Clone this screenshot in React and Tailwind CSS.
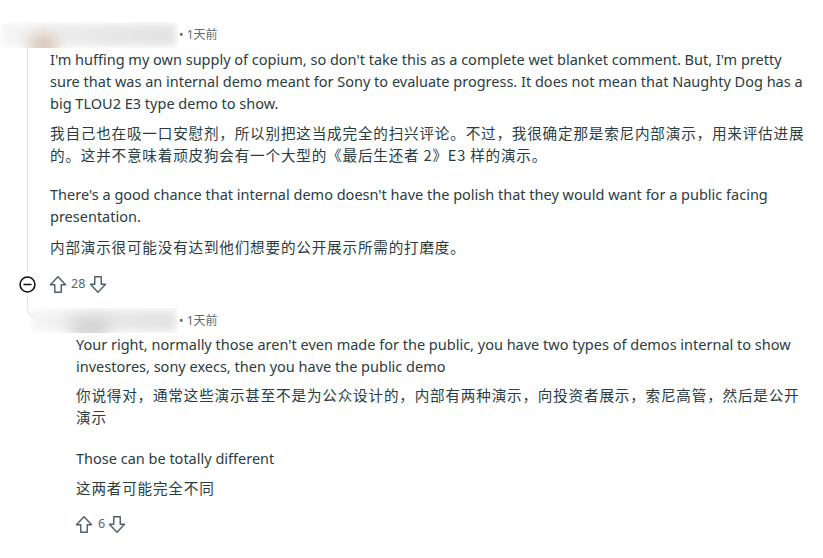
import React from 'react';

const FONT = "font-['Noto_Sans','Noto_Sans_CJK_SC',sans-serif]";
const ZH = "text-[14.6px] tracking-[0.8px] font-['Noto_Sans_CJK_SC',sans-serif]";

function UpArrow() {
  return (
    <svg viewBox="0 0 20 20" className="w-[18px] h-[19px]" fill="none" stroke="#4f5f66" strokeWidth="1.6" strokeLinejoin="round">
      <path d="M10 1.4 L18.4 10.2 H13.6 V18.6 H6.4 V10.2 H1.6 Z" />
    </svg>
  );
}

function DownArrow() {
  return (
    <svg viewBox="0 0 20 20" className="w-[18px] h-[19px]" fill="none" stroke="#4f5f66" strokeWidth="1.6" strokeLinejoin="round">
      <path d="M10 18.6 L18.4 9.8 H13.6 V1.4 H6.4 V9.8 H1.6 Z" />
    </svg>
  );
}

function CollapseIcon() {
  return (
    <svg viewBox="0 0 16 16" className="w-[17px] h-[17px]" fill="none" stroke="#111" strokeWidth="1.5" strokeLinecap="round">
      <circle cx="8" cy="8" r="7" />
      <path d="M4.8 8 H11.2" />
    </svg>
  );
}

// blurred-out username + avatar
function Blob({ width, avatar }) {
  return (
    <div className="relative h-full overflow-hidden" style={{ width }}>
      <div className="absolute inset-[2px] blur-[4px] bg-gradient-to-r from-[#f5f5f5] via-[#e9e9e9] to-[#e2e2e2]" />
      {avatar && <div className="absolute left-[28px] top-[12px] w-[30px] h-[24px] rounded-full bg-[#d9c8bb] blur-[7px]" />}
      {!avatar && <div className="absolute left-[40px] top-[10px] w-[40px] h-[20px] rounded-full bg-[#cfcfcf] blur-[8px]" />}
    </div>
  );
}

function Meta() {
  return <span className="text-[12px] text-[#5c6c74] ml-[1px]">• 1天前</span>;
}

export default function App() {
  return (
    <div className={`w-[823px] h-[558px] bg-white overflow-hidden text-[#2a3c42] ${FONT}`}>
      {/* comment header */}
      <div className="flex items-center h-[26px] mt-[22px]">
        <Blob width={178} avatar />
        <Meta />
      </div>

      {/* comment body */}
      <div className="ml-[27px] border-l border-[#e0e5e8] pl-[22px] pb-[14px] w-[783px] text-[14.5px] leading-[22px]">
        <p>I'm huffing my own supply of copium, so don't take this as a complete wet blanket comment. But, I'm pretty sure that was an internal demo meant for Sony to evaluate progress. It does not mean that Naughty Dog has a big TLOU2 E3 type demo to show.</p>
        <p className={`mt-[8px] ${ZH}`}>我自己也在吸一口安慰剂，所以别把这当成完全的扫兴评论。不过，我很确定那是索尼内部演示，用来评估进展的。这并不意味着顽皮狗会有一个大型的《最后生还者 2》E3 样的演示。</p>
        <p className="mt-[17px]">There's a good chance that internal demo doesn't have the polish that they would want for a public facing presentation.</p>
        <p className={`mt-[9px] ${ZH}`}>内部演示很可能没有达到他们想要的公开展示所需的打磨度。</p>
      </div>

      {/* actions */}
      <div className="flex items-center h-[24px] pl-[19px]">
        <CollapseIcon />
        <div className="ml-[13px]"><UpArrow /></div>
        <span className="ml-[4px] text-[12.5px] text-[#56666d]">28</span>
        <div className="ml-[4px]"><DownArrow /></div>
      </div>

      {/* reply header */}
      <div className="flex h-[37px]">
        <div className="ml-[27px] w-[12px] h-[22px] border-l border-b border-[#e0e5e8] rounded-bl-[10px]" />
        <div className="self-end flex items-center h-[25px] -ml-[9px]">
          <Blob width={148} />
          <Meta />
        </div>
      </div>

      {/* reply body */}
      <div className="pl-[76px] w-[810px] text-[14.5px] leading-[22px]">
        <p>Your right, normally those aren't even made for the public, you have two types of demos internal to show investores, sony execs, then you have the public demo</p>
        <p className={`mt-[7px] ${ZH}`}>你说得对，通常这些演示甚至不是为公众设计的，内部有两种演示，向投资者展示，索尼高管，然后是公开演示</p>
        <p className="mt-[19px]">Those can be totally different</p>
        <p className={`mt-[8px] ${ZH}`}>这两者可能完全不同</p>
      </div>

      <div className="flex items-center h-[24px] mt-[13px] pl-[75px]">
        <UpArrow />
        <span className="ml-[5px] text-[12.5px] text-[#56666d]">6</span>
        <div className="ml-[3px]"><DownArrow /></div>
      </div>
    </div>
  );
}
